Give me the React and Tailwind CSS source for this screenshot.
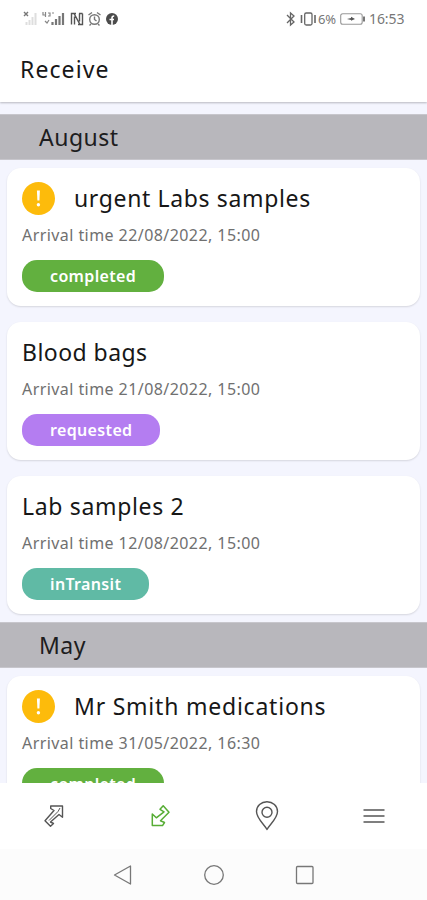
import React from "react";

const font = "font-['Noto_Sans','Open_Sans',sans-serif]";

function StatusBar() {
  return (
    <div className="flex h-[37px] shrink-0 items-center pl-[23px] pr-[22px] text-[#777]">
      <svg width="98" height="18" viewBox="0 0 98 18" fill="none">
        <path d="M1 2l4 4M5 2L1 6" stroke="#777" strokeWidth="1.4" />
        <path d="M3.500 15v-3M6.500 15v-5M9.500 15V7M12.500 15V3" stroke="#dedede" strokeWidth="2" />
        <path d="M20 2v3h3M22.500 2v5M25 3h2v3h-2M29 3h2M22 11l2 2 2-3" stroke="#888" strokeWidth="1.2" />
        <path d="M29.500 15v-3M33 15v-6M36.500 15V6M40 15V3" stroke="#777" strokeWidth="2.2" />
        <path d="M48.500 14.500V3.500h2.500l6 11h2.500V3.500M48 3.500h5M55 14.500h4.500M56 3.500h3.500M51.500 6.500v8M56.500 11.500v-8" stroke="#555" strokeWidth="1.400" />
        <circle cx="71.500" cy="9.500" r="4.800" stroke="#777" strokeWidth="1.400" />
        <path d="M65.500 5l3.500-2.500M77.500 5l-3.500-2.500M71.500 6.500v3l2 1.500M68 14l-1.500 1.500M75 14l1.500 1.500" stroke="#777" strokeWidth="1.400" />
        <circle cx="89" cy="9" r="6" fill="#4b4b4b" />
        <path d="M89 15V8c0-1.500.7-2 2.200-2M86.500 9.500h4.500" stroke="#fff" strokeWidth="1.600" />
      </svg>
      <div className="ml-auto flex items-center">
        <svg className="-ml-1" width="33" height="16" viewBox="0 0 33 16" fill="none" stroke="#666" strokeWidth="1.300">
          <path d="M2 4l7 7-3.500 3V2L9 5l-7 7" />
          <path d="M16.500 4v8M30 4v8" strokeWidth="1.600" />
          <rect x="19.700" y="2" width="7.300" height="12" rx="1.500" />
        </svg>
        <span className="w-[22px] text-[13px] leading-4 tracking-[-0.3px]">6%</span>
        <svg width="26" height="14" viewBox="0 0 26 14" fill="none">
          <rect x="0.700" y="1.700" width="21.500" height="10.600" rx="2" stroke="#999" strokeWidth="1.100" />
          <path d="M24 4.500v5" stroke="#555" strokeWidth="1.600" />
          <path d="M7 7l4-1V4.800L15 7l-4 1.800V8z" fill="#555" />
        </svg>
        <span className="ml-[3px] w-[36px] whitespace-nowrap text-[14px] leading-4 tracking-[-0.1px]">16:53</span>
      </div>
    </div>
  );
}

function MonthBar({ name }) {
  return (
    <div className="flex h-[46px] shrink-0 items-center border-y border-[#c7c6cc] bg-[#b8b7bc] pl-[39px] text-[23px] leading-[30px] tracking-[0.5px] text-[#1d1d20]">
      {name}
    </div>
  );
}

function Card({ title, tracking, time, status, color, urgent }) {
  return (
    <article className="mx-[7px] h-[138px] shrink-0 rounded-[14px] bg-white px-[15px] pt-[14px] shadow-[0_1px_2px_rgba(0,0,0,0.13)]">
      <div className="flex h-[33px] items-center">
        {urgent && (
          <svg className="mr-[19px]" width="33" height="33" viewBox="0 0 33 33">
            <circle cx="16.500" cy="16.500" r="16.500" fill="#fdbb0b" />
            <path d="M14.900 8.500h3l-.5 10h-2z" fill="#fff" />
            <circle cx="16.400" cy="22.800" r="1.700" fill="#fff" />
          </svg>
        )}
        <h2 className={`-mt-[2px] whitespace-nowrap text-[23px] leading-[32px] text-[#171717] ${tracking}`}>{title}</h2>
      </div>
      <p className="mt-[8px] whitespace-nowrap text-[16px] leading-[24px] tracking-[0.43px] text-[#707070]">
        Arrival time {time}
      </p>
      <div className="mt-[13px] flex">
        <span className={`flex h-[32px] items-center rounded-[15px] px-[28px] text-[16px] font-semibold leading-[24px] tracking-[0.35px] text-white ${color}`}>
          {status}
        </span>
      </div>
    </article>
  );
}

function BottomNav() {
  return (
    <nav className="grid h-[66px] shrink-0 grid-cols-4 items-center justify-items-center bg-white text-[#555]">
      <svg width="24" height="28" viewBox="0 0 24 28" fill="none" stroke="currentColor" strokeWidth="1.400" strokeLinejoin="round">
        <path d="M9.700 4H21.500V15.300L18 12.500L9.500 20L12.500 21.500L9.500 24.300L4 18.700L13 8.500L9.700 6.500Z" />
        <path d="M8 18.500L17 9.500L19 6" strokeWidth="1" />
      </svg>
      <svg width="24" height="28" viewBox="0 0 24 28" fill="none" stroke="#57ad35" strokeWidth="1.500" strokeLinejoin="round">
        <path d="M15.200 3.700L21 10.300L12.500 18.700L16.500 20.500L14.500 23.600H4.300V12L8.300 15.800L16 9.800L12 7.300Z" />
      </svg>
      <svg width="24" height="30" viewBox="0 0 24 30" fill="none" stroke="currentColor" strokeWidth="1.400" strokeLinejoin="round">
        <path d="M12 28.500C9.500 23.500 1.500 17.500 1.500 10.500a10.500 9.800 0 0 1 21 0C22.500 17.500 14.500 23.500 12 28.500Z" />
        <circle cx="12" cy="11.200" r="5" />
      </svg>
      <svg width="22" height="16" viewBox="0 0 22 16" fill="none" stroke="currentColor" strokeWidth="1.700">
        <path d="M.5 2h21M.5 8h21M.5 14h21" />
      </svg>
    </nav>
  );
}

function SystemNav() {
  return (
    <div className="flex h-[51px] shrink-0 items-center justify-center bg-[#fcfcfc] pl-px">
      <svg width="204" height="24" viewBox="0 0 204 24" fill="none" stroke="#777" strokeWidth="1.300" strokeLinejoin="round">
        <path d="M18.500 3v18L2.500 12z" />
        <circle cx="102" cy="12" r="9.300" />
        <rect x="184.500" y="3.500" width="16.500" height="17" rx="1" />
      </svg>
    </div>
  );
}

export default function App() {
  return (
    <div className={`flex h-[900px] w-[427px] flex-col overflow-hidden bg-[#f4f5fe] ${font}`}>
      <header className="z-10 h-[102px] shrink-0 bg-white shadow-[0_1px_2px_rgba(0,0,0,0.25)]">
        <StatusBar />
        <h1 className="pl-[20px] pt-[16px] text-[23px] leading-[32px] tracking-[1.1px] text-[#171717]">Receive</h1>
      </header>
      <main className="flex min-h-0 flex-1 flex-col overflow-hidden pt-[12px]">
        <MonthBar name="August" />
        <section className="flex shrink-0 flex-col gap-[16px] py-[8px]">
          <Card urgent title="urgent Labs samples" tracking="tracking-[0.64px]" time="22/08/2022, 15:00" status="completed" color="bg-[#62b03f]" />
          <Card title="Blood bags" tracking="tracking-[0.45px]" time="21/08/2022, 15:00" status="requested" color="bg-[#b47df1]" />
          <Card title="Lab samples 2" tracking="tracking-[0.67px]" time="12/08/2022, 15:00" status="inTransit" color="bg-[#60baa5]" />
        </section>
        <MonthBar name="May" />
        <section className="flex shrink-0 flex-col py-[8px]">
          <Card urgent title="Mr Smith medications" tracking="tracking-[0.78px]" time="31/05/2022, 16:30" status="completed" color="bg-[#62b03f]" />
        </section>
      </main>
      <BottomNav />
      <SystemNav />
    </div>
  );
}
